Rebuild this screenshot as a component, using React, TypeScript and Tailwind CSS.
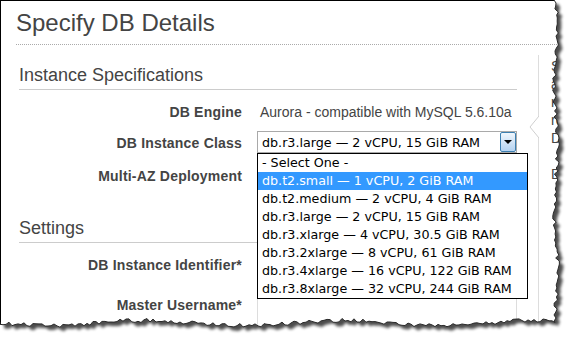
import React from 'react';

const instanceClasses = [
  '- Select One -',
  'db.t2.small — 1 vCPU, 2 GiB RAM',
  'db.t2.medium — 2 vCPU, 4 GiB RAM',
  'db.r3.large — 2 vCPU, 15 GiB RAM',
  'db.r3.xlarge — 4 vCPU, 30.5 GiB RAM',
  'db.r3.2xlarge — 8 vCPU, 61 GiB RAM',
  'db.r3.4xlarge — 16 vCPU, 122 GiB RAM',
  'db.r3.8xlarge — 32 vCPU, 244 GiB RAM',
];

const helpLines = ['Select the', 'appropriate', 'needs and', 'requirements', 'DB Instance', '\u00a0', 'DB'];

// torn paper edge (deterministic jitter)
let seed = 11;
const rnd = () => {
  seed = (seed * 16807) % 2147483647;
  return (seed - 1) / 2147483646;
};
const edge: [number, number][] = [];
for (let y = 0; y <= 321; y += 3) edge.push([556 + 1.5 * Math.sin(y / 19) + (rnd() - 0.5) * 4, y]);
for (let x = 555; x >= 0; x -= 3) edge.push([x, 323 + 2.5 * Math.sin(x / 31) + (rnd() - 0.5) * 4]);
edge.push([0, 322]);
const edgeLine = edge.map(([x, y], i) => `${i ? 'L' : 'M'}${x.toFixed(1)} ${y.toFixed(1)}`).join(' ');
const paper = `M0 0 L${edgeLine.slice(1)} Z`;
const outside = `M0 0 H573 V340 H0 Z ${paper}`;

const Label = ({ children, className = '' }: { children: React.ReactNode; className?: string }) => (
  <div className={`w-[223px] shrink-0 text-right font-bold text-[14px] leading-[16px] tracking-[0.2px] ${className}`}>
    {children}
  </div>
);

const TornEdge = () => (
  <svg className="absolute inset-0 pointer-events-none" width={573} height={340}>
    <defs>
      <clipPath id="outside">
        <path d={outside} clipRule="evenodd" />
      </clipPath>
      <filter id="soft" x="-5%" y="-5%" width="110%" height="110%">
        <feGaussianBlur stdDeviation="1.8" />
      </filter>
    </defs>
    <path d={outside} fill="#fff" fillRule="evenodd" />
    <g clipPath="url(#outside)">
      <path d={paper} transform="translate(4 4)" fill="#000" opacity="0.7" filter="url(#soft)" />
    </g>
    <path d={edgeLine} fill="none" stroke="#2a2a2a" strokeWidth="1" />
  </svg>
);

export default function App() {
  return (
    <div className="relative w-[573px] h-[340px] overflow-hidden bg-white font-['Liberation_Sans',Arial,sans-serif] text-[#444]">
      <div className="h-full border-l border-t border-black">
        <div className="ml-[15px] pt-[8px] pb-[7px] border-b border-dotted border-[#aaa]">
          <h1 className="text-[24px] leading-[28px]">Specify DB Details</h1>
        </div>

        <div className="flex">
          <div className="w-[537px] shrink-0 pl-[18px] pt-[20px]">
            {/* Instance Specifications */}
            <h2 className="w-[498px] text-[18px] leading-[21px] pb-[3px] border-b border-[#ccc]">
              Instance Specifications
            </h2>

            <div className="mt-[14px] flex h-[16px]">
              <Label>DB Engine</Label>
              <div className="ml-[15px] pl-[3px] text-[14px] leading-[16px] whitespace-nowrap">
                Aurora - compatible with MySQL 5.6.10a
              </div>
            </div>

            <div className="mt-[11px] flex h-[22px]">
              <Label className="pt-[4px]">DB Instance Class</Label>
              <div className="relative ml-[15px] w-[260px] h-[22px] flex border border-[#a9a9a9] bg-white font-['DejaVu_Sans',Tahoma,sans-serif] text-[12.7px] text-black">
                <span className="flex-1 pl-[4px] pt-[2px] leading-[18px] whitespace-nowrap">db.r3.large — 2 vCPU, 15 GiB RAM</span>
                <div className="w-[16px] h-full flex items-center justify-center border border-[#3c7fb1] rounded-[2px] bg-gradient-to-b from-[#f0f6fc] to-[#b4d2f0]">
                  <div className="w-0 h-0 border-l-[4px] border-r-[4px] border-t-[4px] border-l-transparent border-r-transparent border-t-black" />
                </div>

                <div className="absolute left-[-1px] top-[21px] z-10 w-[271px] border border-black bg-white">
                  {instanceClasses.map((c, i) => (
                    <div
                      key={c}
                      className={`h-[18px] pl-[4px] leading-[18px] whitespace-nowrap ${i === 1 ? 'bg-[#3399ff] text-white' : ''}`}
                    >
                      {c}
                    </div>
                  ))}
                </div>
              </div>
            </div>

            <div className="mt-[15px] flex h-[16px]">
              <Label>Multi-AZ Deployment</Label>
            </div>

            {/* Settings */}
            <h2 className="mt-[34px] w-[498px] text-[18px] leading-[21px] pb-[3px] border-b border-[#ccc]">Settings</h2>

            <div className="mt-[10px] flex items-start">
              <Label className="pt-[4px]">DB Instance Identifier*</Label>
              <div className="ml-[15px] w-[260px] h-[24px] border border-[#ddd]" />
            </div>

            <div className="mt-[16px] flex items-start">
              <Label className="pt-[4px]">Master Username*</Label>
              <div className="ml-[15px] w-[260px] h-[40px] border border-[#ddd]" />
            </div>
          </div>

          {/* help panel, cut by the torn edge */}
          <div className="relative w-[20px] mt-[10px] h-[300px] pt-[2px] pl-[12px] border-l border-[#ddd]">
            <svg className="absolute left-[-10px] top-[61px]" width={10} height={23}>
              <path d="M10 0 L1 11 L10 22 Z" fill="#fff" />
              <path d="M10 0 L1 11 L10 22" fill="none" stroke="#cfcfcf" />
            </svg>
            {helpLines.map((l, i) => (
              <div key={i} className="text-[14px] leading-[18px] whitespace-nowrap">
                {l}
              </div>
            ))}
          </div>
        </div>
      </div>
      <TornEdge />
    </div>
  );
}
